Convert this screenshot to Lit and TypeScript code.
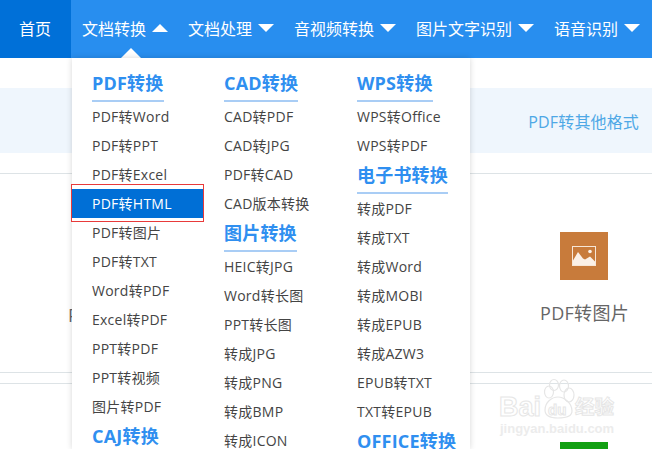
import { LitElement, html, css, svg } from "lit";
import { customElement } from "lit/decorators.js";

type Entry = { h?: string; t?: string; sel?: boolean };
const h = (s: string): Entry => ({ h: s });
const i = (s: string, sel = false): Entry => ({ t: s, sel });

const COLS: Entry[][] = [
  [h("PDF转换"), i("PDF转Word"), i("PDF转PPT"), i("PDF转Excel"), i("PDF转HTML", true), i("PDF转图片"), i("PDF转TXT"), i("Word转PDF"), i("Excel转PDF"), i("PPT转PDF"), i("PPT转视频"), i("图片转PDF"), h("CAJ转换")],
  [h("CAD转换"), i("CAD转PDF"), i("CAD转JPG"), i("PDF转CAD"), i("CAD版本转换"), h("图片转换"), i("HEIC转JPG"), i("Word转长图"), i("PPT转长图"), i("转成JPG"), i("转成PNG"), i("转成BMP"), i("转成ICON")],
  [h("WPS转换"), i("WPS转Office"), i("WPS转PDF"), h("电子书转换"), i("转成PDF"), i("转成TXT"), i("转成Word"), i("转成MOBI"), i("转成EPUB"), i("转成AZW3"), i("EPUB转TXT"), i("TXT转EPUB"), h("OFFICE转换")],
];
const NAV: [string, boolean][] = [["文档转换", true], ["文档处理", false], ["音视频转换", false], ["图片文字识别", false], ["语音识别", false]];

@customElement("app-root")
export class AppRoot extends LitElement {
  static styles = css`
    :host { display: block; width: 652px; height: 449px; overflow: hidden; position: relative; background: #fff;
      font-family: "Open Sans", "Noto Sans CJK SC", sans-serif; }
    .nav { height: 58px; background: #288eef; display: flex; color: #fff; font-size: 16px; }
    .home { width: 71px; background: #0070d8; display: flex; align-items: center; justify-content: center; padding: 0 1px 2px 0; box-sizing: border-box; }
    .items { display: flex; gap: 20px; margin-left: 11px; }
    .nav-item { display: flex; align-items: center; gap: 6px; padding-bottom: 2px; box-sizing: border-box; position: relative; white-space: nowrap; }
    .caret { width: 16px; height: 8px; display: block; fill: #fff; }
    .pointer { position: absolute; left: 39px; bottom: 0; width: 0; height: 0; border: 10px solid transparent; border-top: 0; border-bottom-color: #fff; }
    .page { display: flex; flex-direction: column; }
    .band { margin-top: 30px; height: 65px; background: #eff6fd; display: flex; justify-content: flex-end; align-items: center; padding-right: 13px; color: #4ea8e6; font-size: 16px; letter-spacing: .15px; }
    .rule { height: 1px; background: #dde3e6; }
    .r1 { margin-top: 20px; }
    .cards { height: 198px; display: flex; justify-content: space-between; color: #666; font-size: 18px; }
    .card { display: flex; flex-direction: column; align-items: center; width: 120px; padding-top: 58px; gap: 20px; }
    .card.left { margin-left: 67px; width: auto; align-items: flex-start; padding-top: 128px; }
    .card.right { margin-right: 8px; }
    .tile { width: 48px; height: 48px; background: #c87b3b; display: flex; align-items: center; justify-content: center; }
    .tile svg { width: 24px; height: 20px; display: block; }
    .label { white-space: nowrap; line-height: 26px; letter-spacing: .3px; padding-left: 1px; }
    .r2 { margin-top: 10px; }
    .bottom { display: flex; justify-content: flex-end; padding: 58px 44px 0 0; }
    .green { width: 48px; height: 48px; background: #12a012; }
    .menu { position: absolute; left: 72px; top: 58px; width: 398px; height: 391px; background: #fff; box-shadow: 0 0 6px rgba(0,0,0,.16);
      display: grid; grid-template-columns: 132px 133px 133px; padding-top: 10px; box-sizing: border-box; }
    .col { display: flex; flex-direction: column; padding-left: 20px; }
    .head { height: 34px; flex: none; display: flex; align-items: flex-start; }
    .head span { color: #2f8ff0; font-size: 18px; font-weight: 700; line-height: 30px; height: 32px; border-bottom: 2px solid #a9cdf5; white-space: nowrap; letter-spacing: .2px; }
    .it { height: 29px; flex: none; line-height: 29px; font-size: 14px; color: #444; white-space: nowrap; letter-spacing: .25px; }
    .it.sel { background: #006fd6; color: #fff; margin-left: -20px; padding-left: 20px; width: 111px; }
    .mark { position: absolute; left: 71px; top: 184px; width: 131px; height: 36px; border: 1px solid #e83a3a; pointer-events: none; }
    .wm { position: absolute; left: 499px; top: 378px; width: 120px; height: 62px; color: transparent; pointer-events: none; }
    .wm svg { position: absolute; left: 0; top: 0; }
    .wm-a { position: absolute; left: 0; top: 14px; font: 700 27px/30px "Liberation Sans", sans-serif; -webkit-text-stroke: 1px #e6e6e6; }
    .wm-du { position: absolute; left: 49px; top: 23px; font: 700 15px/18px "Liberation Sans", sans-serif; -webkit-text-stroke: 1px #e6e6e6; }
    .wm-b { position: absolute; left: 76px; top: 15px; font: 700 19.5px/26px "Noto Sans CJK SC", sans-serif; -webkit-text-stroke: 1px #e6e6e6; white-space: nowrap; }
    .wm-c { position: absolute; left: 1px; top: 43px; font: 700 13px/16px "Liberation Sans", sans-serif; color: #ececec; white-space: nowrap; }
  `;

  private caret(up: boolean) {
    return html`<svg class="caret" viewBox="0 0 16 8">${svg`<path d=${up ? "M8 0L16 8H0Z" : "M0 0H16L8 8Z"}></path>`}</svg>`;
  }

  render() {
    return html`
      <div class="page">
        <div class="nav">
          <div class="home">首页</div>
          <div class="items">
            ${NAV.map(([t, up]) => html`<div class="nav-item">${t}${this.caret(up)}${up ? html`<i class="pointer"></i>` : ""}</div>`)}
          </div>
        </div>
        <div class="band">PDF转其他格式</div>
        <div class="rule r1"></div>
        <div class="cards">
          <div class="card left"><span class="label">PDF转Word</span></div>
          <div class="card right">
            <div class="tile">
              <svg viewBox="0 0 24 20" fill="none">
                <rect x=".5" y=".5" width="23" height="19" stroke="#f7e6d6"></rect>
                <path d="M1 19V14.5L6 6L11 12.5L13 13.5L18 10.5L23 15.5V19Z" fill="#fbf0e6"></path>
                <circle cx="18" cy="5.5" r="1.8" fill="#fbf0e6"></circle>
              </svg>
            </div>
            <span class="label">PDF转图片</span>
          </div>
        </div>
        <div class="rule"></div>
        <div class="rule r2"></div>
        <div class="bottom"><div class="green"></div></div>
      </div>
      <div class="menu">
        ${COLS.map(col => html`<div class="col">
          ${col.map(e => e.h
            ? html`<div class="head"><span>${e.h}</span></div>`
            : html`<div class="it ${e.sel ? "sel" : ""}">${e.t}</div>`)}
        </div>`)}
      </div>
      <div class="mark"></div>
      <div class="wm">
        <svg width="120" height="62" viewBox="0 0 120 62" fill="none" stroke="#e6e6e6" stroke-width="1.2">
          <ellipse cx="50" cy="14" rx="4.5" ry="6"></ellipse>
          <ellipse cx="55" cy="7" rx="4.5" ry="5.5"></ellipse>
          <ellipse cx="65" cy="8" rx="4.5" ry="6"></ellipse>
          <ellipse cx="70" cy="17" rx="5" ry="7"></ellipse>
          <path d="M46 32C46 24 53 19 59 19C65 19 73 25 73 33C73 38 68 40 59 40C51 40 46 38 46 32Z"></path>
        </svg>
        <span class="wm-a">Bai</span>
        <span class="wm-du">du</span>
        <span class="wm-b">经验</span>
        <span class="wm-c">jingyan.baidu.com</span>
      </div>
    `;
  }
}
